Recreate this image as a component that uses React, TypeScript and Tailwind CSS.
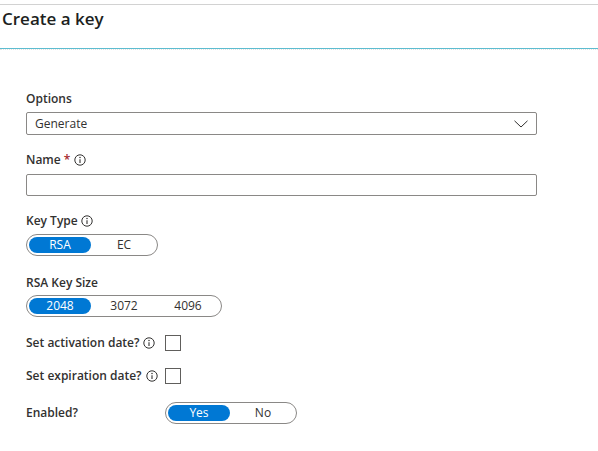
import React from "react";

const font = { fontFamily: '"Open Sans", "Noto Sans", sans-serif' };

function Info() {
  return (
    <svg width="12" height="12" viewBox="0 0 12 12" className="shrink-0">
      <circle cx="6" cy="6" r="5.2" fill="none" stroke="#323130" strokeWidth="1" />
      <line x1="6" y1="5.2" x2="6" y2="9" stroke="#323130" strokeWidth="1.1" />
      <circle cx="6" cy="3.5" r="0.75" fill="#323130" />
    </svg>
  );
}

function Pill({ options, selected }: { options: string[]; selected: number }) {
  return (
    <div className="flex h-[22px] w-fit items-center rounded-full border border-[#8a8886] bg-white px-[1px]">
      {options.map((o, i) => (
        <div
          key={o}
          className={
            i === selected
              ? "mx-[1px] flex h-[16px] w-[62px] items-center justify-center rounded-full bg-[#0078d4] text-[12px] text-white"
              : "mx-[1px] flex h-[16px] w-[62px] items-center justify-center text-[12px] text-[#323130]"
          }
        >
          {o}
        </div>
      ))}
    </div>
  );
}

export default function App() {
  return (
    <div className="h-[451px] w-[598px] overflow-hidden bg-white text-[#323130]" style={font}>
      <div className="h-[4px]" />
      <div className="border-t border-[#d2d2d2]" />
      <div className="flex h-[44px] items-start border-b border-[#5dbdd0] pl-[2px] pt-[2px]">
        <h1 className="text-[17px] font-semibold leading-[24px] text-[#201f1e]">Create a key</h1>
      </div>
      <div className="h-[1px] w-full border-b border-dotted border-[#e3e3e3]" />

      <div className="px-[26px]">
        <div className="mt-[41px] h-[16px] text-[12px] font-semibold leading-[16px]">Options</div>
        <div className="mt-[5px] flex h-[23px] w-[511px] items-center justify-between rounded-[2px] border border-[#8a8886] pl-[8px] pr-[8px]">
          <span className="text-[12px]">Generate</span>
          <svg width="14" height="8" viewBox="0 0 14 8">
            <path d="M0.5 0.8 L7 7 L13.5 0.8" fill="none" stroke="#323130" strokeWidth="1" />
          </svg>
        </div>

        <div className="mt-[17px] flex h-[16px] items-center gap-[4px] text-[12px] font-semibold leading-[16px]">
          <span>
            Name <span className="text-[#a4262c]">*</span>
          </span>
          <Info />
        </div>
        <div className="mt-[6px] h-[22px] w-[511px] rounded-[2px] border border-[#8a8886]" />

        <div className="mt-[17px] flex h-[16px] items-center gap-[3px] text-[12px] font-semibold leading-[16px]">
          <span>Key Type</span>
          <Info />
        </div>
        <div className="mt-[5px]">
          <Pill options={["RSA", "EC"]} selected={0} />
        </div>

        <div className="mt-[19px] h-[16px] text-[12px] font-semibold leading-[16px]">RSA Key Size</div>
        <div className="mt-[4px]">
          <Pill options={["2048", "3072", "4096"]} selected={0} />
        </div>

        <div className="mt-[18px] flex h-[16px] items-center">
          <div className="flex w-[139px] items-center gap-[4px] text-[12px] font-semibold">
            <span>Set activation date?</span>
            <Info />
          </div>
          <div className="h-[16px] w-[16px] border border-[#605e5c] bg-white" />
        </div>

        <div className="mt-[17px] flex h-[16px] items-center">
          <div className="flex w-[139px] items-center gap-[4px] text-[12px] font-semibold">
            <span>Set expiration date?</span>
            <Info />
          </div>
          <div className="h-[16px] w-[16px] border border-[#605e5c] bg-white" />
        </div>

        <div className="mt-[18px] flex h-[22px] items-center">
          <div className="w-[139px] text-[12px] font-semibold">Enabled?</div>
          <Pill options={["Yes", "No"]} selected={0} />
        </div>
      </div>
    </div>
  );
}
